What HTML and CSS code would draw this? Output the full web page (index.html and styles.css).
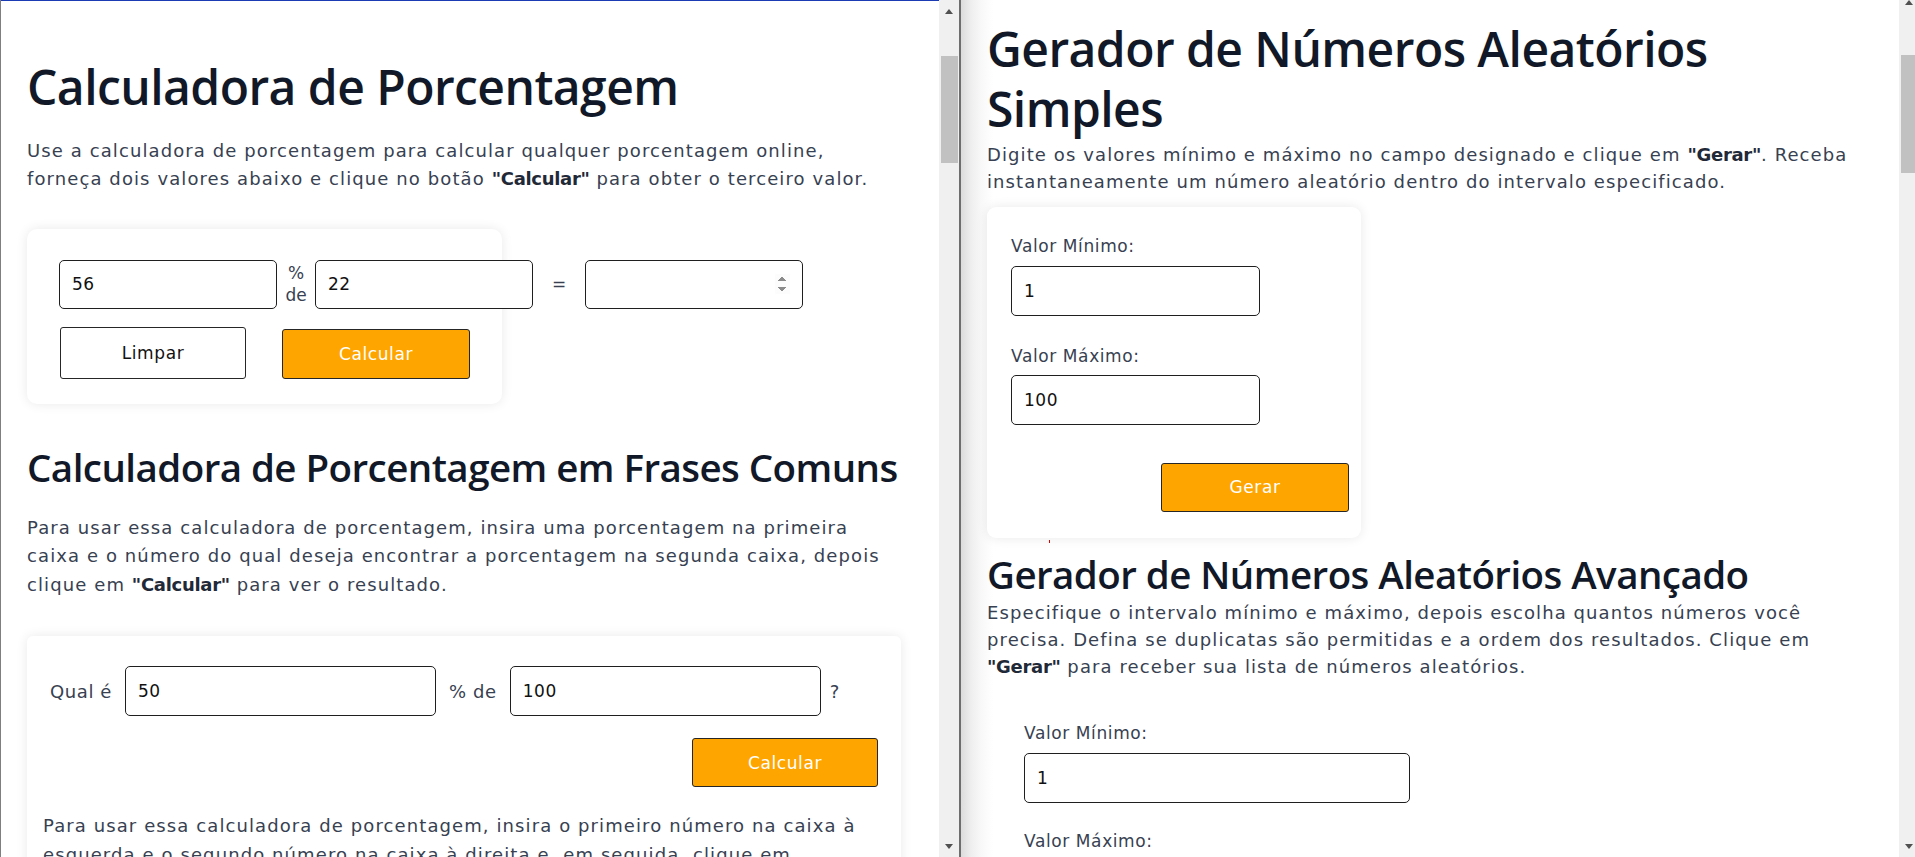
FILE: index.html
```html
<!DOCTYPE html>
<html lang="pt">
<head>
<meta charset="utf-8">
<title>Calculadoras</title>
<link rel="stylesheet" href="styles.css">
</head>
<body>
<div class="pane pane-left">
  <main class="content content-left">
    <h1 class="title">Calculadora de Porcentagem</h1>
    <p class="lead">Use a calculadora de porcentagem para calcular qualquer porcentagem online,<br>forneça dois valores abaixo e clique no botão <strong>"Calcular"</strong> para obter o terceiro valor.</p>

    <section class="card card-main">
      <div class="calc-row">
        <input class="field field-sm" type="text" value="56">
        <span class="op op-stack">%<br>de</span>
        <input class="field field-sm" type="text" value="22">
        <span class="op op-eq">=</span>
        <input class="field field-sm field-num" type="number" value="">
      </div>
      <div class="btn-row">
        <button class="btn btn-light">Limpar</button>
        <button class="btn btn-orange">Calcular</button>
      </div>
    </section>

    <h2 class="subtitle">Calculadora de Porcentagem em Frases Comuns</h2>
    <p class="lead lead-3">Para usar essa calculadora de porcentagem, insira uma porcentagem na primeira<br>caixa e o número do qual deseja encontrar a porcentagem na segunda caixa, depois<br>clique em <strong>"Calcular"</strong> para ver o resultado.</p>

    <section class="card card-phrase">
      <div class="phrase-row">
        <span class="phrase-label">Qual é</span>
        <input class="field field-wide" type="text" value="50">
        <span class="phrase-label">% de</span>
        <input class="field field-wide" type="text" value="100">
        <span class="phrase-label phrase-q">?</span>
      </div>
      <div class="phrase-actions">
        <button class="btn btn-orange">Calcular</button>
      </div>
      <p class="lead card-text">Para usar essa calculadora de porcentagem, insira o primeiro número na caixa à<br>esquerda e o segundo número na caixa à direita e, em seguida, clique em<br><strong>"Calcular"</strong> para ver o resultado.</p>
    </section>
  </main>
  <div class="scrollbar sb-left">
    <span class="arrow arrow-up"></span>
    <span class="thumb"></span>
    <span class="sb-fill"></span>
    <span class="arrow arrow-down"></span>
  </div>
</div>
<div class="divider"></div>
<div class="pane pane-right">
  <main class="content content-right">
    <h1 class="title title-right">Gerador de Números Aleatórios<br>Simples</h1>
    <p class="lead lead-right">Digite os valores mínimo e máximo no campo designado e clique em <strong>"Gerar"</strong>. Receba<br>instantaneamente um número aleatório dentro do intervalo especificado.</p>

    <section class="card card-gen">
      <label class="gen-label">Valor Mínimo:</label>
      <input class="field field-gen" type="text" value="1">
      <label class="gen-label gen-label-2">Valor Máximo:</label>
      <input class="field field-gen" type="text" value="100">
      <div class="gen-actions">
        <button class="btn btn-orange">Gerar</button>
      </div>
    </section>
    <div class="err-mark"></div>

    <h2 class="subtitle subtitle-right">Gerador de Números Aleatórios Avançado</h2>
    <p class="lead lead-right">Especifique o intervalo mínimo e máximo, depois escolha quantos números você<br>precisa. Defina se duplicatas são permitidas e a ordem dos resultados. Clique em<br><strong>"Gerar"</strong> para receber sua lista de números aleatórios.</p>

    <section class="adv-form">
      <label class="gen-label adv-label">Valor Mínimo:</label>
      <input class="field field-adv" type="text" value="1">
      <label class="gen-label adv-label-2">Valor Máximo:</label>
    </section>
  </main>
  <div class="scrollbar sb-right">
    <span class="arrow arrow-up arrow-up-right"></span>
    <span class="thumb thumb-right"></span>
    <span class="sb-fill"></span>
    <span class="arrow arrow-down"></span>
  </div>
</div>
</body>
</html>
```
FILE: styles.css
```css
* { box-sizing: border-box; }

html, body {
  margin: 0;
  padding: 0;
}

body {
  width: 1915px;
  height: 857px;
  overflow: hidden;
  display: flex;
  background: #ffffff;
  font-family: "DejaVu Sans", "Open Sans", sans-serif;
  color: #374151;
}

/* ---------- panes ---------- */
.pane {
  display: flex;
  height: 857px;
  flex-shrink: 0;
  overflow: hidden;
}

.pane-left {
  width: 959px;
  border-left: 1px solid #7f7f7f;
}

.divider {
  width: 2px;
  height: 857px;
  flex-shrink: 0;
  background: #6e6e6e;
}

.pane-right {
  width: 958px;
}

.content {
  flex-shrink: 0;
  height: 857px;
  overflow: hidden;
}

.content-left {
  width: 938px;
  border-top: 1px solid #1b3bb5;
  padding: 57px 0 0 26px;
}

.content-right {
  width: 938px;
  padding: 19px 0 0 26px;
  background: linear-gradient(to right, #dcdcdc 0px, #eeeeee 10px, #f8f8f8 20px, #ffffff 32px);
}

/* ---------- scrollbars ---------- */
.scrollbar {
  width: 20px;
  height: 857px;
  flex-shrink: 0;
  background: #f0f0f0;
  display: flex;
  flex-direction: column;
  align-items: center;
}

.arrow {
  width: 0;
  height: 0;
  border-left: 4.5px solid transparent;
  border-right: 4.5px solid transparent;
}

.arrow-up {
  margin-top: 9px;
  border-bottom: 5px solid #505050;
}

.arrow-up-right {
  margin-top: 0;
}

.arrow-down {
  margin-bottom: 8px;
  border-top: 5px solid #505050;
}

.thumb {
  width: 17px;
  height: 107px;
  margin-top: 42px;
  background: #c1c1c1;
}

.thumb-right {
  margin-top: 50px;
  height: 118px;
}

.sb-fill { flex: 1; }

/* ---------- typography ---------- */
.title {
  margin: 0;
  font-family: "Open Sans", "Noto Sans", sans-serif;
  font-weight: 600;
  font-size: 48px;
  line-height: 57.6px;
  letter-spacing: -0.55px;
  color: #111827;
  white-space: nowrap;
}

.title-right {
  line-height: 60px;
}

.subtitle {
  margin: 40px 0 0;
  font-family: "Open Sans", "Noto Sans", sans-serif;
  font-weight: 600;
  font-size: 38.5px;
  line-height: 46px;
  letter-spacing: -0.55px;
  color: #111827;
  white-space: nowrap;
}

.lead {
  margin: 21px 0 0;
  font-size: 18px;
  line-height: 28.5px;
  letter-spacing: 1.1px;
  color: #374151;
  white-space: nowrap;
}

.lead strong {
  font-weight: 700;
  letter-spacing: -0.3px;
  color: #1f2937;
}

.lead-3 { margin-top: 24px; }

.lead-right {
  margin-top: 2px;
  line-height: 27.3px;
}

/* ---------- cards ---------- */
.card {
  background: #ffffff;
  border-radius: 10px;
  box-shadow: 0 0 12px rgba(0, 0, 0, 0.09);
}

.card-main {
  width: 475px;
  margin-top: 35px;
  padding: 31px 0 25px 32px;
}

.calc-row {
  display: flex;
  align-items: center;
  width: 760px;
}

.field {
  height: 49px;
  border: 1px solid #1f1f1f;
  border-radius: 5px;
  padding: 0 12px;
  font-family: "DejaVu Sans", "Open Sans", sans-serif;
  font-size: 17px;
  letter-spacing: 0.5px;
  color: #111111;
  background: #ffffff;
  outline: none;
}

.field-sm { width: 218px; }

.field-num::-webkit-inner-spin-button,
.field-num::-webkit-outer-spin-button {
  opacity: 1;
}

.op {
  font-size: 17px;
  color: #374151;
  text-align: center;
  flex-shrink: 0;
}

.op-stack {
  width: 38px;
  line-height: 22px;
}

.op-eq { width: 52px; }

.btn-row {
  display: flex;
  align-items: flex-end;
  margin-top: 18px;
  padding-left: 1px;
}

.btn {
  height: 50px;
  border: 1px solid #262626;
  border-radius: 3px;
  font-family: "DejaVu Sans", "Open Sans", sans-serif;
  font-size: 17px;
  letter-spacing: 0.6px;
  cursor: pointer;
}

.btn-light {
  width: 186px;
  height: 52px;
  background: #ffffff;
  color: #111111;
}

.btn-orange {
  width: 188px;
  background: #ffa500;
  color: #ffffff;
}

.btn-row .btn-orange { margin-left: 36px; }

/* phrase card */
.card-phrase {
  width: 874px;
  margin-top: 37px;
  padding: 30px 23px 20px 16px;
  border-radius: 6px;
}

.phrase-row {
  display: flex;
  align-items: center;
  gap: 13px;
  padding-left: 7px;
}

.phrase-label {
  font-size: 18px;
  letter-spacing: 0.6px;
  color: #374151;
  flex-shrink: 0;
}

.phrase-q { margin-left: -4px; }

.field-wide { width: 311px; height: 50px; }

.phrase-actions {
  display: flex;
  justify-content: flex-end;
  margin-top: 22px;
}

.phrase-actions .btn { height: 49px; width: 186px; }

.card-text { margin-top: 25px; }

/* generator card */
.card-gen {
  width: 374px;
  margin-top: 11px;
  padding: 26px 12px 26px 24px;
  display: flex;
  flex-direction: column;
  align-items: flex-start;
  border-radius: 9px;
}

.gen-label {
  font-size: 17px;
  line-height: 27px;
  letter-spacing: 0.6px;
  color: #374151;
  margin-bottom: 6px;
}

.gen-label-2 { margin-top: 27px; margin-bottom: 5px; }

.field-gen { width: 249px; height: 50px; }

.gen-actions {
  align-self: stretch;
  display: flex;
  justify-content: flex-end;
  margin-top: 38px;
}

.gen-actions .btn { height: 49px; }

.err-mark {
  width: 1px;
  height: 3px;
  margin: 2px 0 0 62px;
  background: #e00000;
}

.subtitle-right { margin-top: 8px; }

.adv-form {
  display: flex;
  flex-direction: column;
  align-items: flex-start;
  padding-left: 37px;
  margin-top: 40px;
}

.field-adv { width: 386px; height: 50px; }

.adv-label-2 { margin-top: 25px; }
```
